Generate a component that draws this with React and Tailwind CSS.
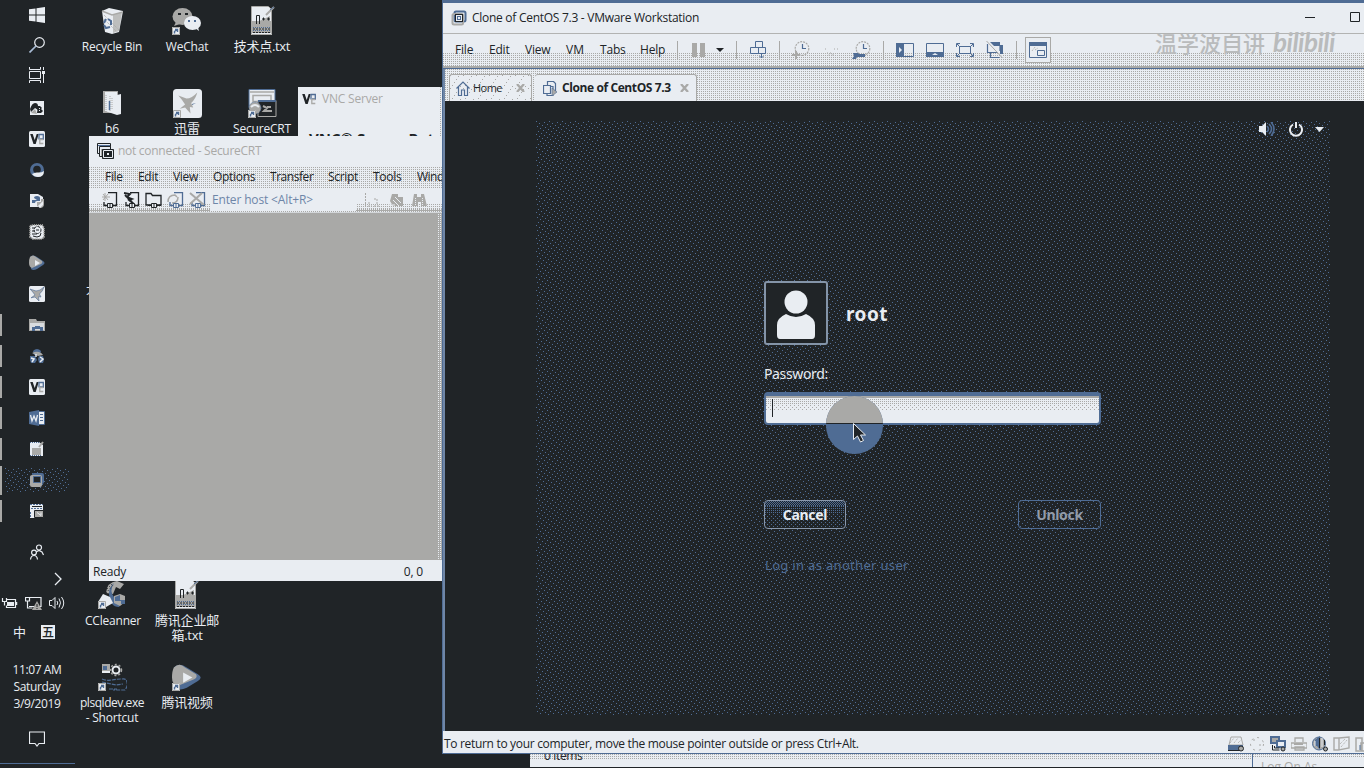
import React from "react";

const INK = "#202427";
const LIGHT = "#e9edf2";
const GRAY = "#a9a9a7";
const BLUE = "#4f6c94";

/* Ordered-dither texture that fills its parent */
function Dither({ id, kind, color = GRAY, className = "" }) {
  const size = { checker: 2, quarter: 2, half: 4, sparse: 13, wide: 13 }[kind];
  const cells = {
    checker: [[0, 0], [1, 1]],
    quarter: [[0, 0]],
    half: [[0, 0], [2, 2]],
    sparse: Array.from({ length: 13 }, (_, i) => [i, (i * 5) % 13]),
    wide: Array.from({ length: 6 }, (_, i) => [i * 2, (i * 10) % 13]),
  }[kind];
  return (
    <svg className={"pointer-events-none absolute inset-0 h-full w-full " + className} shapeRendering="crispEdges" aria-hidden="true">
      <defs>
        <pattern id={id} width={size} height={size} patternUnits="userSpaceOnUse">
          {cells.map(([x, y]) => <rect key={x + "-" + y} x={x} y={y} width="1" height="1" fill={color} />)}
        </pattern>
      </defs>
      <rect width="100%" height="100%" fill={`url(#${id})`} />
    </svg>
  );
}

function Svg({ w = 16, h = 16, vb, children, className = "" }) {
  return (
    <svg width={w} height={h} viewBox={vb || `0 0 ${w} ${h}`} fill="none" className={"block shrink-0 " + className}>
      {children}
    </svg>
  );
}

/* ---------- glyphs ---------- */
const Bird = () => (
  <path d="M1 3l6 2q4 0 8-4-1 4-4.500 7l1.500 3-2.500-.3L10 15l-4-4-4 .8L6 9Q4 6 1 3z" />
);
const Vnc = () => (
  <>
    <path d="M1.200 3h2.500l2 6 2-6h2L6.700 13H4.500z" fill={INK} />
    <path d="M10 8.500V3.500h4.300V8h-3.300" stroke={BLUE} strokeWidth="1.300" />
    <path d="M14.300 8.500h-3.500V12.500h3.500" stroke={GRAY} strokeWidth="1.300" />
  </>
);
const PlayBlob = () => (
  <>
    <path d="M1 2Q4-1 8 2l6 4q3 2 0 4l-6 4q-4 2-6 0z" fill={BLUE} />
    <path d="M1 2Q4-1 7 2l6 4q1 2-1 3l-9 4Q0 12 0 8t1-6z" fill={GRAY} />
    <path d="M6 5l5 3-5 3z" fill={LIGHT} />
  </>
);
const NoteFile = () => (
  <>
    <path d="M2 1h18l3 3v25H2z" fill={LIGHT} />
    <path d="M21 10v10H4v-2z" fill={GRAY} />
    <path d="M2 15h20v12H2z" fill={GRAY} />
    <path d="M2.500.5h17l3 3v25h-20z" stroke={GRAY} />
    <path d="M7.500 18V9.500h3V18M13 13h3m2 0h3M14.500 11.500v3m5-3v3" stroke={INK} />
    <path d="M4 21.500h18M4 24.500h18" stroke={BLUE} strokeDasharray="1 1" />
    <path d="M4 23h17M4 26.500h17" stroke={INK} strokeDasharray="2 1" />
    <path d="M17 9l8-8" stroke={GRAY} strokeWidth="2" />
    <path d="M21 4l4-3" stroke={BLUE} />
  </>
);
const Shortcut = ({ x = 0, y = 20 }) => (
  <g transform={`translate(${x} ${y})`}>
    <path d="M0 0h8v8H0z" fill={LIGHT} />
    <path d="M.5.5h7v7h-7z" stroke={GRAY} />
    <path d="M2.500 6.500V4.500L5 2.500M3 2.500h2.500V5" stroke={BLUE} strokeWidth="1.400" />
  </g>
);
const Vmware = () => (
  <>
    <rect x="3.500" y="1.500" width="11" height="10" rx="1.500" stroke={BLUE} strokeWidth="2" />
    <rect x="1.500" y="4" width="10.500" height="10.500" rx="1.500" stroke={GRAY} strokeWidth="2" />
    <rect x="4.500" y="4.500" width="7" height="7" fill={LIGHT} stroke={INK} />
    <rect x="6.500" y="6.500" width="3" height="3" stroke={BLUE} />
  </>
);
const CrtGlyph = () => (
  <>
    <path d="M.5.5h13v10H.5z" fill={LIGHT} stroke={INK} />
    <path d="M1 2.500h12" stroke={BLUE} />
    <path d="M2.500 3.500h11v10h-11z" fill={LIGHT} stroke={INK} />
    <path d="M4 6h9v7H4z" fill={GRAY} />
    <path d="M5.500 6.500h11v9h-11z" fill={INK} stroke={INK} />
    <path d="M6.500 7.500h9v7h-9z" stroke={LIGHT} />
    <path d="M10 10h2v2h-2z" fill={LIGHT} />
  </>
);

const taskIcons = [
  <Svg key="a"><path d="M1 1h14v14H1z" fill={LIGHT} /><path d="M1 9q2-6 5-6t3 3v4L6 8l-4 4z" fill={INK} /><path d="M2 13l4-4 2 5z" fill={GRAY} /><path d="M9 6h2l2 2-1 1 2 2-2 2H8z" fill={INK} /><path d="M10 8.500h1m-1 2h1" stroke={LIGHT} /></Svg>,
  <Svg key="b"><rect width="16" height="16" rx="1.500" fill={LIGHT} /><Vnc /></Svg>,
  <Svg key="c"><circle cx="8" cy="8" r="7" fill={BLUE} /><circle cx="8" cy="7.500" r="3.800" fill={INK} /><path d="M3 12q3-2 6-1.500T15 9q0 6-6 6-4 0-6-3z" fill={LIGHT} /></Svg>,
  <Svg key="d"><path d="M1 1h8l5 3v10H1z" fill={LIGHT} /><path d="M5 5q0-2 3-2t3 2v3H8Q6 8 6 10H3V7h5" fill={BLUE} /><path d="M8 13V9h4V6h3v5q0 4-4 4z" fill={GRAY} /><path d="M9 13l5-5v4l-3 3z" fill={LIGHT} /></Svg>,
  <Svg key="e"><path d="M1 2l3-1h9l2 3v9l-2 2H4l-3-2z" fill={LIGHT} /><path d="M1 2l3-1h9l2 3v9l-2 2H4l-3-2z" stroke={GRAY} strokeDasharray="1 1" strokeWidth="2" /><circle cx="8.500" cy="6" r="3.500" stroke={INK} strokeDasharray="3 1" /><path d="M3 4h3m-3 3h3m1-1h3M12 9q0 4-4 4l-4-1m-1-2h5" stroke={INK} /></Svg>,
  <Svg key="f"><PlayBlob /></Svg>,
  <Svg key="g"><rect width="16" height="16" rx="1.500" fill={LIGHT} /><g fill={GRAY} stroke={BLUE} strokeWidth=".6"><Bird /></g></Svg>,
  <Svg key="h"><path d="M0 2h7l1 2h8v10H0z" fill={GRAY} /><path d="M1 6h14v7H1z" fill={LIGHT} opacity=".75" /><path d="M3 14v-4h3V9h5v1h3v4h-3v-2H6v2z" fill={BLUE} /></Svg>,
  <Svg key="i"><path d="M4 3q4-4 8 0l-1 4H5z" fill={BLUE} /><path d="M3 5q4-2 7-1t4 3l-5 1z" fill={GRAY} /><path d="M1 8h5l2 4-2 3H2l-1-3zM10 8h4l1 4-1 3h-4l-1-4z" fill={BLUE} /><path d="M2 10l3 1-2 3m8-5l3 2-3 3M7 6v3" stroke={LIGHT} strokeWidth="1.500" /></Svg>,
  <Svg key="j"><rect width="16" height="16" rx="1.500" fill={LIGHT} /><Vnc /></Svg>,
  <Svg key="k"><path d="M9 2h6v12H9z" fill={LIGHT} /><path d="M0 2l10-2v16L0 14z" fill={BLUE} /><path d="M9 1.500h6.500v13H9" stroke={BLUE} /><path d="M11 4.500h3m-3 3h3m-3 3h3" stroke={BLUE} /><path d="M1.500 5l1.500 6 2-5 2 5 1.500-6" stroke={LIGHT} strokeWidth="1.300" /></Svg>,
  <Svg key="l"><path d="M1 1h9l4 3v11H1z" fill={LIGHT} /><path d="M3 7h9v7H3z" fill={GRAY} /><path d="M1 1.500h10M1 14.500h12" stroke={BLUE} strokeDasharray="1 1" /><path d="M10 6l4-5" stroke={GRAY} strokeWidth="2" /></Svg>,
  <Svg key="m"><rect x="3" y="1" width="12" height="11" rx="2" fill={BLUE} /><rect x="1" y="3" width="12" height="12" rx="2" fill={GRAY} /><path d="M4.500 4.500h7v6h-7z" fill={INK} stroke={BLUE} /></Svg>,
  <Svg key="n"><path d="M1 1h13v14H1z" fill={LIGHT} /><path d="M1 1.500h13M2 5.500h11M1.500 9v6" stroke={BLUE} strokeDasharray="2 1" /><path d="M3 3.500h10" stroke={INK} /><path d="M5.500 7.500h9v7h-9z" fill={GRAY} stroke={INK} /><path d="M8 9.500l4 3v-3" stroke={LIGHT} /></Svg>,
];

function Taskbar() {
  return (
    <nav className="absolute left-0 top-0 flex h-[768px] w-[74px] flex-col bg-[#202427] text-[#e9edf2]">
      <div className="flex h-[30px] items-center justify-center">
        <Svg><path d="M0 2.300l6.500-.9V7.500H0zM7.500 1.200L16 0v7.500H7.500zM0 8.500h6.500v6L0 13.700zM7.500 8.500H16V16l-8.500-1.200z" fill={LIGHT} /></Svg>
      </div>
      <div className="flex h-[30px] items-center justify-center">
        <Svg><circle cx="10.500" cy="5.500" r="4.800" stroke={LIGHT} strokeWidth="1.200" /><path d="M7 9L.5 15.500" stroke="#a9bdd6" strokeWidth="1.700" /></Svg>
      </div>
      <div className="flex h-[30px] items-center justify-center">
        <Svg><path d="M.5 0v2.500h11V0M.5 16v-2.500h11V16M.5 4.500h11v7H.5zM14.500 0v3m0 4v9" stroke={LIGHT} /><path d="M13 4h3v3h-3z" fill={LIGHT} /></Svg>
      </div>
      <ul className="mt-[2px] flex flex-col">
        {taskIcons.map((icon, i) => (
          <li key={i} className="relative flex h-[31px] items-center justify-center">
            {i === 12 && <div className="absolute left-[5px] top-[4px] h-6 w-16"><Dither id="dActive" kind="sparse" color={BLUE} /></div>}
            {i > 6 && <span className={i === 12 ? "absolute left-0 top-0.5 h-[29px] w-0.5 bg-[#a9a9a7]" : "absolute left-0 top-[5px] h-[22px] w-0.5 bg-[#a9a9a7]"} />}
            <span className="relative">{icon}</span>
          </li>
        ))}
      </ul>
      <div className="mt-[10px] flex h-8 items-center justify-center">
        <Svg><circle cx="10" cy="3.500" r="2.500" stroke={LIGHT} strokeWidth="1.200" /><path d="M7 8l3-1.500L13 8l1.500 3" stroke={LIGHT} strokeWidth="1.200" /><circle cx="5" cy="8.500" r="2.400" fill={INK} stroke={LIGHT} strokeWidth="1.200" /><path d="M1.500 15.500Q2 11.500 5 11.500t3.500 4" stroke={LIGHT} strokeWidth="1.200" /></Svg>
      </div>
      <div className="-mt-px flex h-6 items-center justify-end pr-3"><Svg w={8} h={14}><path d="M1 1l6 6-6 6" stroke={LIGHT} strokeWidth="1.300" /></Svg></div>
      <div className="flex h-6 items-center gap-[7px] pl-[1px]">
        <Svg w={17}><path d="M1.500 3v3.500h4V3M3.500 6v4.500M5.500 4.500h9v8h-9v-2" stroke={LIGHT} strokeWidth="1.200" /><path d="M6 7h7v4H6z" fill={LIGHT} /><path d="M15.500 7v3" stroke={LIGHT} strokeWidth="1.500" /></Svg>
        <Svg w={17}><path d="M4 2.500h12v9H4M.5 2.500h4v3.500H.5zM2.500 6v7h5" stroke={LIGHT} strokeWidth="1.200" /><path d="M12 6l5 9H7z" fill={GRAY} /><path d="M12 9v3m0 1v1" stroke={INK} /></Svg>
        <Svg w={17}><path d="M.5 5.500H3l3-3v11l-3-3H.5z" stroke={LIGHT} /><path d="M8 6q1.500 2 0 4m2-6.500q3 4 0 9M12.500 2q4.500 6 0 12" stroke={LIGHT} /></Svg>
      </div>
      <div className="flex h-[34px] items-center gap-[15px] pl-[13px] font-['Noto_Sans_CJK_SC',sans-serif]">
        <span className="text-[13px] leading-[14px]">中</span>
        <span className="h-[14px] w-[14px] bg-[#e9edf2] text-center text-[12px] font-medium leading-[13px] text-[#202427]">五</span>
      </div>
      <div className="mt-3 h-[51px] text-center text-[12px] leading-[17px] tracking-[-0.4px]">
        <div>11:07 AM</div><div className="tracking-[-0.350px]">Saturday</div><div className="tracking-[-0.400px]">3/9/2019</div>
      </div>
      <div className="mt-3 flex h-[30px] items-center justify-center">
        <Svg><path d="M.5 1h15v11.500H10L8 15l-2-2.500H.5z" stroke={LIGHT} strokeWidth="1.200" /></Svg>
      </div>
      <div className="mt-[9px] h-px w-[75px] bg-[#4f6c94]" />
    </nav>
  );
}

function DesktopIcon({ pos, labels, children }) {
  return (
    <div className={"absolute flex w-[78px] flex-col items-center text-[#e9edf2] " + pos}>
      <div className="flex h-[32px] items-center justify-center">{children}</div>
      <div className="mt-[2px] whitespace-nowrap text-center text-[12px] leading-[15px] tracking-[-0.200px]">
        {labels.map((l) => <div key={l}>{l}</div>)}
      </div>
    </div>
  );
}

function Desktop() {
  return (
    <>
      <DesktopIcon pos="left-[73px] top-[5px]" labels={["Recycle Bin"]}>
        <Svg w={22} h={26}><path d="M1 3l7-3 14 3-4 21-7 2-7-2z" fill={LIGHT} /><path d="M12 7l9-3-3 19-6 2z" fill={GRAY} opacity=".7" /><path d="M1 3l10 4 11-3" stroke={GRAY} strokeWidth="1.500" /><path d="M3 7l15 15M3 11l12 12" stroke={GRAY} strokeDasharray="1 1" /><path d="M7 11l3 2v4m-1 2l-4 1-2-3m0-2l2-4" stroke={BLUE} strokeWidth="2" /></Svg>
      </DesktopIcon>
      <DesktopIcon pos="left-[148px] top-[5px]" labels={["WeChat"]}>
        <Svg w={30} h={28}><ellipse cx="10.500" cy="9.500" rx="10" ry="8.500" fill={GRAY} /><path d="M4 15l-2 4 6-2z" fill={GRAY} /><path d="M6 6h3v2H6zm7 0h3v2h-3z" fill={INK} /><ellipse cx="20.500" cy="16" rx="8.500" ry="7" fill={LIGHT} /><path d="M23 21l4 3-1-4z" fill={LIGHT} /><path d="M16 13h2v2h-2zm6 0h2v2h-2z" fill={BLUE} /><Shortcut x={0} y={20} /></Svg>
      </DesktopIcon>
      <DesktopIcon pos="left-[223px] top-[5px]" labels={[<span key="t" className="text-[13px] tracking-[-0.300px]">技术点.txt</span>]}><Svg w={26} h={30}><NoteFile /></Svg></DesktopIcon>
      <DesktopIcon pos="left-[73px] top-[87px]" labels={["b6"]}>
        <Svg w={20} h={26}><path d="M1 1h15v22H1z" fill={GRAY} /><path d="M3 2h12v3l4-1v20l-4 1L3 21z" fill={LIGHT} /><path d="M4 5v17M8 6v15M10 8v12" stroke={GRAY} strokeDasharray="1 1" /><path d="M7.500 11v9" stroke={BLUE} strokeWidth="1.500" /></Svg>
      </DesktopIcon>
      <DesktopIcon pos="left-[148px] top-[87px]" labels={[<span key="x" className="text-[13px]">迅雷</span>]}>
        <Svg w={29} h={29}><rect width="29" height="29" rx="3.500" fill={LIGHT} /><g fill={GRAY} transform="translate(4 2) scale(1.350 1.500)"><Bird /></g><path d="M19 15l4-1-4 2z" fill={BLUE} /><Shortcut x={0} y={21} /></Svg>
      </DesktopIcon>
      <DesktopIcon pos="left-[223px] top-[87px]" labels={["SecureCRT"]}>
        <Svg w={29} h={29}><path d="M1 .5h26v18H1z" fill={LIGHT} stroke={BLUE} /><path d="M2 3h24M5 6.500h18v6H5z" stroke={GRAY} strokeWidth="1.500" /><path d="M10 11.500h18v16H10z" fill={INK} stroke={GRAY} /><path d="M10 12h18" stroke={BLUE} strokeWidth="2" /><path d="M15 17l4 2-3 3h8m-5-4h4" stroke={GRAY} strokeWidth="2" /><circle cx="7" cy="19" r="6" fill={GRAY} stroke={BLUE} strokeDasharray="1 1" /><path d="M3 18q4-4 8 0" stroke={LIGHT} strokeWidth="2" /><Shortcut x={0} y={21} /></Svg>
      </DesktopIcon>
      <DesktopIcon pos="left-[74px] top-[579px]" labels={["CCleanner"]}>
        <Svg w={29} h={30} className="-ml-px"><path d="M8 13Q9 2 19 1l7 3-4 5-4-2-3 7z" fill={GRAY} /><path d="M16 3q-5 8 0 14 4 5 9 4l-4 6q-9 0-10-13 0-7 5-11z" fill={BLUE} /><path d="M5 14l7 3 3 6-7 4-8-5z" fill={LIGHT} /><path d="M16 16l6-2 5 2v6l-5 4-6-3z" fill={GRAY} /><path d="M22 15v5h5v4h-4v-3h-6v-4z" fill={BLUE} /><path d="M7 11l8-8M8 13l8-9" stroke={INK} strokeDasharray="1 2" /><Shortcut x={0} y={21} /></Svg>
      </DesktopIcon>
      <DesktopIcon pos="left-[148px] top-[579px]" labels={[<span key="a" className="text-[13px]">腾讯企业邮</span>, <span key="b" className="text-[13px] tracking-[-0.300px]">箱.txt</span>]}><Svg w={26} h={30} className="-ml-0.5"><NoteFile /></Svg></DesktopIcon>
      <DesktopIcon pos="left-[73px] top-[661px]" labels={[<span key="p" className="tracking-[-0.450px]">plsqldev.exe</span>, "- Shortcut"]}>
        <Svg w={29} h={29}><path d="M4 1h8v8H4z" fill={GRAY} /><path d="M5 3h4v4H5z" fill={BLUE} /><path d="M4 9h8" stroke={LIGHT} strokeWidth="2" /><circle cx="18" cy="7" r="3.500" stroke={LIGHT} strokeWidth="2" /><circle cx="18" cy="7" r="5.500" stroke={GRAY} strokeWidth="1.500" strokeDasharray="2 2" /><path d="M4 16q5 2 10 1t10-1q4-1 5 3t-2 8H15M4 19l14 3 7-1M11 26h8" stroke={BLUE} strokeWidth="1.200" strokeDasharray="4 1" /><Shortcut x={0} y={20} /></Svg>
      </DesktopIcon>
      <DesktopIcon pos="left-[148px] top-[661px]" labels={[<span key="v" className="text-[13px]">腾讯视频</span>]}>
        <Svg w={30} h={29}><g transform="translate(0 1) scale(1.850 1.700)"><PlayBlob /></g><Shortcut x={0} y={20} /></Svg>
      </DesktopIcon>
      <div className="absolute left-[86px] top-[282px] w-[4px] overflow-hidden text-[12px] leading-[15px] text-[#e9edf2]">大</div>
    </>
  );
}

function VncWindow() {
  return (
    <section className="absolute left-[298px] top-[87px] h-[49px] w-[144px] overflow-hidden bg-[#e9edf2]">
      <header className="flex h-6 items-center gap-[5px] pl-[3px]">
        <Svg><Vnc /></Svg>
        <span className="whitespace-nowrap text-[12px] tracking-[-0.200px] text-[#a9a9a7]">VNC Server</span>
      </header>
      <div className="flex justify-between whitespace-nowrap pl-[11px] pr-2 pt-[17px] text-[15px] font-bold leading-[20px] text-[#202427]"><span>VNC® Server</span><span>Rat</span></div>
      <div className="absolute right-0 top-0 h-full w-0.5"><Dither id="dVnc" kind="quarter" /></div>
    </section>
  );
}

function HostTool({ kind, color }) {
  return (
    <Svg w={17} h={16}>
      {kind !== "folder" && <path d="M7 .5h8.500v13H3V10" stroke={color} strokeWidth="1.300" />}
      {kind === "folder" && <path d="M1 13V1.500h5l1.500 2H16V13H1z" stroke={color} strokeWidth="1.300" />}
      {kind === "new" && <path d="M4 1v8M1 5h8M2 2l5 6m0-6L2 8" stroke={GRAY} />}
      {kind === "quick" && <path d="M1 1l6 1-3 3 5 2-3 1 5 4M2 3l7 7" stroke={color} strokeWidth="1.800" />}
      {kind === "re" && <path d="M1 10q0-7 7-7l2 2M11 5q0 6-6 6" stroke={GRAY} strokeWidth="1.500" />}
      {kind === "off" && <path d="M1 1l14 12M13 1L1 12" stroke={GRAY} strokeWidth="2" />}
      <path d="M3 13.500h13" stroke={color} />
      <path d="M6.500 11.500h5v4h-5z" fill={LIGHT} stroke={color} /><path d="M9 11v5" stroke={color} />
    </Svg>
  );
}

function SecureCrt() {
  const m = "shrink-0 ";
  return (
    <section className="absolute left-[89px] top-[136px] flex h-[445px] w-[353px] flex-col overflow-hidden bg-[#e9edf2] text-[#202427]">
      <header className="flex h-[31px] shrink-0 items-center gap-1 pb-0.5 pl-2">
        <Svg w={17}><CrtGlyph /></Svg>
        <span className="whitespace-nowrap text-[12px] tracking-[-0.280px] text-[#a9a9a7]">not connected - SecureCRT</span>
      </header>
      <div className="relative h-[21px] shrink-0">
        <Dither id="dCrtMenu" kind="quarter" />
        <div className="relative flex h-full items-center whitespace-nowrap pb-0.5 pl-4 text-[12px] tracking-[-0.300px]">
          <span className={m + "w-[33px]"}>File</span><span className={m + "w-[35px]"}>Edit</span><span className={m + "w-[40px]"}>View</span>
          <span className={m + "w-[57px]"}>Options</span><span className={m + "w-[58px] tracking-[-0.450px]"}>Transfer</span><span className={m + "w-[45px]"}>Script</span>
          <span className={m + "w-[44px]"}>Tools</span><span className={m + "w-[25px] tracking-[-0.500px]"}>Wind</span>
        </div>
      </div>
      <div className="relative flex h-6 shrink-0 items-center pl-3">
        <div className="absolute inset-x-0 bottom-0 h-2"><Dither id="dCrtTool" kind="quarter" /></div>
        <div className="absolute inset-x-0 bottom-0 h-[3px]"><Dither id="dCrtTool2" kind="checker" /></div>
        <div className="relative flex gap-[5px]">
          <HostTool kind="new" color={INK} /><HostTool kind="quick" color={INK} /><HostTool kind="folder" color={INK} /><HostTool kind="re" color={BLUE} /><HostTool kind="off" color={BLUE} />
        </div>
        <div className="relative ml-1 flex h-[22px] w-[146px] items-center whitespace-nowrap bg-[#e9edf2] pb-px pl-0.5 text-[12px] tracking-[-0.150px] text-[#6e86a8]">Enter host &lt;Alt+R&gt;</div>
        <div className="relative ml-[9px] flex gap-[7px]">
          <Svg><path d="M.5 1v14M3 14h4m2 0h5M9 7h3v5M4 10v2" stroke={GRAY} strokeDasharray="2 1" /></Svg>
          <Svg><path d="M4 2h6v3h5v9H5L2 9z" fill={GRAY} /><path d="M5 8l6 6M1 13h6M7 5l6 6" stroke={LIGHT} /></Svg>
          <Svg><path d="M3 2h3v3h4V2h3l3 12h-6v-4H7v4H1z" fill={GRAY} /><path d="M4.500 6v7m7-7v7" stroke={LIGHT} strokeDasharray="1 1" /></Svg>
        </div>
      </div>
      <div className="relative min-h-0 flex-1 bg-[#a9a9a7]">
        <div className="absolute inset-y-0 right-0 w-1"><Dither id="dCrtEdge" kind="quarter" color={LIGHT} /></div>
        <div className="absolute inset-x-0 top-0 h-px bg-[#d3d6d9]" />
      </div>
      <footer className="flex h-[21px] shrink-0 items-center justify-between pl-1 pr-[19px] pt-[2px] text-[12px] tracking-[-0.200px]"><span>Ready</span><span>0, 0</span></footer>
    </section>
  );
}

const Sep = ({ className = "" }) => <span className={"h-[18px] w-px shrink-0 bg-[#a9a9a7] " + className} />;
const Clock = () => (<><circle cx="11" cy="7.500" r="6.800" stroke={GRAY} strokeWidth="1.200" strokeDasharray="2 1" /><path d="M11.500 3v4.500h3.500" stroke={BLUE} strokeWidth="1.200" /></>);

function VmToolbar() {
  const m = "shrink-0 overflow-visible whitespace-nowrap ";
  return (
    <div className="relative h-[32px] shrink-0">
      <div className="absolute inset-x-0 bottom-0 h-[13px]"><Dither id="dVmMenu" kind="quarter" /></div>
      <div className="relative flex h-full items-center text-[12px] tracking-[-0.200px]">
        <span className={m + "ml-[12px] w-[34px]"}>File</span><span className={m + "w-9"}>Edit</span><span className={m + "w-[41px]"}>View</span>
        <span className={m + "w-[34px] tracking-normal"}>VM</span><span className={m + "w-10"}>Tabs</span><span className={m + "w-[37px]"}>Help</span>
        <Sep />
        <Svg w={13} h={14} className="ml-[14px]"><path d="M0 0h5v14H0zM8 0h5v14H8z" fill={GRAY} /></Svg>
        <Svg w={8} h={4} className="ml-[11px]"><path d="M0 0h8L4 4z" fill={INK} /></Svg>
        <Sep className="ml-[12px]" />
        <Svg w={17} h={18} className="ml-[13px]"><path d="M5.500.5h7v6h-7zM.500 6.500h8v6h-8zM8.500 6.500h7v6h-7zM11.500 13v4m-2-2l2 2 2-2" stroke={BLUE} /></Svg>
        <Sep className="ml-3" />
        <Svg w={19} h={18} className="ml-[11px]"><Clock /><path d="M5 10v8M1 14h8" stroke={GRAY} strokeWidth="2" /></Svg>
        <Svg w={18} h={18} className="ml-[13px]"><path d="M2 8h1m8 0h4m-11 4h4l3 2H5" stroke={GRAY} strokeDasharray="1 2" /></Svg>
        <Svg w={19} h={18} className="ml-[11px]"><Clock /><path d="M1 12h5l1 1h6v3H5l-1 2H0l2-3z" fill={BLUE} /></Svg>
        <Sep className="ml-3" />
        <Svg w={18} h={14} className="ml-3"><path d="M.5.5h17v13H.5z" stroke={BLUE} /><path d="M0 0h8v14H0z" fill={BLUE} /><path d="M3 4v6l3-3z" fill={LIGHT} /></Svg>
        <Svg w={18} h={14} className="ml-3"><path d="M.5.5h17v13H.5z" stroke={BLUE} /><path d="M0 9h18v5H0z" fill={BLUE} /><path d="M6 12h6l-3-2z" fill={LIGHT} /></Svg>
        <Svg w={18} h={14} className="ml-3"><path d="M3.500 3.500h11v7h-11z" stroke={BLUE} /><path d="M.5 4V.5H4L1 1l3 3M14 .5h3.500V4L17 1l-3 3M.5 10v3.500H4L1 13l3-3M14 13.500h3.500V10l-.5 3-3-3" stroke={BLUE} /></Svg>
        <Svg w={18} h={18} className="ml-3"><path d="M4 1h10v3h3v9h-3V5H8z" fill={BLUE} /><path d="M1.500 3v8.500h3v5h9M14 5v5" stroke={BLUE} strokeWidth="1.200" /><path d="M3 11.500h9" stroke={BLUE} /><path d="M1.500 0l16 17" stroke={LIGHT} /><path d="M.5 0l16 17" stroke={GRAY} /></Svg>
        <Sep className="ml-[12px]" />
        <div className="ml-2 flex h-[26px] w-[26px] shrink-0 items-center justify-center border border-[#a9a9a7] bg-[#e9edf2]">
          <Svg w={18} h={16}><path d="M.5.5h17v15H.5z" stroke={BLUE} /><path d="M0 0h18v4H0z" fill={BLUE} /><path d="M8.500 8.500h7v5h-7z" stroke={BLUE} /><path d="M3 9l3-4m0 3l3-2" stroke={GRAY} strokeDasharray="1 1" /></Svg>
        </div>
      </div>
    </div>
  );
}

const StatusIcons = () => (
  <div className="flex shrink-0 items-center gap-[5px]">
    <Svg w={16}><path d="M3 1h10l2 8H1z" fill={LIGHT} stroke={GRAY} /><path d="M2 7l4-5m0 5l4-5m0 5l3-3" stroke={GRAY} strokeDasharray="1 1" /><path d="M0 9h15v5H0z" fill={BLUE} /><path d="M0 14.500h12" stroke={INK} /><circle cx="13" cy="12.500" r="2.500" fill={GRAY} stroke={INK} /></Svg>
    <Svg w={16}><circle cx="8" cy="8" r="6.500" stroke={GRAY} strokeDasharray="2 4" /><path d="M4 4h2m4 5h2" stroke={GRAY} /></Svg>
    <Svg w={16}><path d="M1 1h8v6H1z" fill={GRAY} stroke={BLUE} strokeWidth="2" /><path d="M7 5h8v6H7z" fill={LIGHT} stroke={BLUE} strokeWidth="2" /><path d="M2.500 9v5h7m-5-4v2h5" stroke={INK} /><circle cx="13" cy="13" r="2" fill={GRAY} stroke={INK} /></Svg>
    <Svg w={16}><path d="M4 6V2h8v4M0 7h16v5H0zM4 11h9v3H4z" stroke={GRAY} strokeWidth="1.300" /><path d="M3 8h9" stroke={GRAY} strokeWidth="2" /></Svg>
    <Svg w={16}><circle cx="7" cy="7.500" r="6.500" fill={GRAY} stroke={BLUE} /><path d="M4 3l4-3v14l-3-4H3V4z" fill={BLUE} /><path d="M3 5v5m7-8v9" stroke={LIGHT} /><path d="M7.500 2v10M12.500 4v5" stroke={INK} /><circle cx="13.500" cy="13" r="2" fill={GRAY} stroke={INK} /></Svg>
    <Svg w={17}><path d="M1 2h5v12H1zM6 2l10-1v11L6 14z" stroke={GRAY} strokeWidth="1.400" /><path d="M8 11l6-7M7 8l5-5" stroke={GRAY} strokeDasharray="1 1" /></Svg>
    <Svg w={16}><path d="M1 2h6v13H1zM6 7h8v8H6z" stroke={GRAY} strokeWidth="1.500" /><path d="M5 9v5" stroke={BLUE} /></Svg>
  </div>
);

function GuestScreen() {
  return (
    <div className="relative ml-[91px] mt-5 h-[594px] w-[794px] font-['Noto_Sans','Open_Sans',sans-serif]">
      <Dither id="dGuest" kind="sparse" color={BLUE} />
      <div className="relative flex h-full flex-col">
        <div className="flex h-4 items-center justify-end pr-[6px]">
          <Svg w={16} h={14}><path d="M0 4h3l4-4v14l-4-4H0z" fill={LIGHT} /><path d="M8 4q3 3 0 6M10 2q5 5 0 10M12 0q6 7 0 14" stroke={BLUE} strokeWidth="1.600" /></Svg>
          <Svg w={14} h={15} className="ml-[14px]"><path d="M4 2.500a6 6 0 1 0 6 0M7 0v6" stroke={LIGHT} strokeWidth="2" /></Svg>
          <Svg w={9} h={5} className="ml-3"><path d="M0 0h9L4.500 5z" fill={LIGHT} /></Svg>
        </div>
        <div className="ml-[228px] mt-[144px] flex w-[337px] flex-col">
          <div className="flex h-16 items-center">
            <div className="flex h-16 w-16 items-end justify-center rounded-[3px] border-2 border-[#8494a8] bg-[#202427] pb-[3px]">
              <Svg w={38} h={51}><circle cx="19" cy="13" r="11.500" fill={LIGHT} /><path d="M0 50V36q0-7 9-11 10 6 20 0 9 4 9 11v10q0 4-3 4H3q-3 0-3-4z" fill={LIGHT} /></Svg>
            </div>
            <span className="ml-[18px] mt-0.5 text-[19px] font-bold tracking-[0.450px] text-[#e9edf2]">root</span>
          </div>
          <label className="mt-[19px] h-5 text-[14px] leading-[20px] tracking-[-0.350px] text-[#e9edf2]">Password:</label>
          <div className="relative mt-2 h-[33px] overflow-visible rounded-[4px] border-2 border-t-[4px] border-[#4f6c94] bg-[#e9edf2]">
            <div className="absolute inset-x-0 top-0 h-0.5 bg-[#a9a9a7]" />
            <div className="absolute inset-x-0 top-[3px] h-[5px]"><Dither id="dField" kind="quarter" /></div>
            <div className="absolute inset-x-0 top-[9px] h-[6px]"><Dither id="dField2" kind="half" /></div>
            <div className="absolute left-[6px] top-[3px] h-[18px] w-px bg-[#202427]" />
            <div className="absolute left-[60px] top-0 h-[58px] w-[57px] overflow-hidden rounded-full bg-[#4f6c94]">
              <div className="h-[28px] border-b border-[#202427] bg-[#a9a9a7]" />
            </div>
            <Svg w={14} h={21} className="absolute left-[87px] top-[27px]"><path d="M.5.5v16l4-3.500 3 6 3-1.500-3-5.500h5z" fill={INK} stroke={LIGHT} /></Svg>
          </div>
          <div className="mt-[75px] flex items-center justify-between text-[14px] font-bold tracking-[-0.300px]">
            <div className="relative flex h-[29px] w-[82px] items-center justify-center overflow-hidden rounded-[4px] border border-[#8997ab] bg-[#202427] text-[#e9edf2]">
              <div className="absolute inset-x-0 top-0 h-[5px]"><Dither id="dCancel1" kind="checker" color={BLUE} /></div>
              <div className="absolute inset-x-0 top-[5px] h-[7px]"><Dither id="dCancel2" kind="quarter" color={BLUE} /></div>
              <div className="absolute inset-x-0 top-[13px] h-[14px]"><Dither id="dCancel3" kind="half" color={BLUE} /></div>
              <span className="relative">Cancel</span>
            </div>
            <div className="flex h-[29px] w-[83px] items-center justify-center rounded-[4px] border border-[#4f6c94] text-[#929ba7]">Unlock</div>
          </div>
          <div className="mt-[26px] pl-px text-[13px] leading-[20px] tracking-[0.320px] text-[#4f6c94]">Log in as another user</div>
        </div>
      </div>
    </div>
  );
}

function VmwareWindow() {
  return (
    <section className="absolute left-[442px] top-0 flex h-[754px] w-[922px] flex-col overflow-hidden border-b border-l border-t-[3px] border-[#4f6c94] bg-[#e9edf2] text-[#202427]">
      <header className="flex h-[30px] shrink-0 items-center">
        <Svg w={17} className="-mt-px ml-[8px]"><Vmware /></Svg>
        <span className="ml-[4px] whitespace-nowrap text-[12px] tracking-[-0.275px]">Clone of CentOS 7.3 - VMware Workstation</span>
        <div className="-mt-0.5 ml-auto flex items-center gap-[35px]">
          <Svg w={10} h={10}><path d="M0 5.500h10" stroke={INK} /></Svg>
          <Svg w={10} h={10} className="mr-1"><path d="M.5.5h9v9h-9z" stroke={INK} /></Svg>
        </div>
      </header>
      <div className="h-px shrink-0 bg-[#b2b3b2]" />
      <VmToolbar />
      <div className="h-0.5 shrink-0 bg-[#a9a9a7]" />
      <div className="h-px shrink-0 bg-[#4f6c94]" />
      <div className="flex min-h-0 flex-1 flex-col border-l-2 border-l-[#6f86a6]">
        <div className="relative h-[32px] shrink-0">
          <Dither id="dTabs" kind="quarter" />
          <div className="relative flex h-full items-end pl-1 text-[12px]">
            <div className="relative flex h-[27px] w-[83px] items-center rounded-t-[3px] border-x border-t border-[#a9a9a7] bg-[#e9edf2] pl-[6px]">
              <Dither id="dHome" kind="wide" />
              <Svg w={14} h={15} className="relative"><path d="M.5 7.500L7 1l6.500 6.500M2.500 6v8.500h3V9h3v5.500h3V6" stroke={BLUE} strokeWidth="1.200" /></Svg>
              <span className="relative ml-[3px] text-[11px] tracking-[-0.550px]">Home</span>
              <Svg w={9} h={8} className="relative ml-auto mr-[6px]"><path d="M1 0l7 8M8 0L1 8" stroke={GRAY} strokeWidth="2.300" /></Svg>
            </div>
            <div className="ml-[3px] flex h-[27px] w-[162px] items-center rounded-t-[3px] border-r border-t border-[#a9a9a7] bg-[#e9edf2] pl-2">
              <Svg w={14} h={15}><path d="M4.500 4V.5h6l2 2v7h-3M.5 4.500h7v8h-7zM4 12.500v2h6v-9H7" stroke={BLUE} strokeWidth="1.200" /><path d="M9 7l5 4-5 4z" fill={GRAY} stroke={BLUE} strokeWidth=".6" /></Svg>
              <span className="ml-[5px] whitespace-nowrap font-bold tracking-[-0.400px]">Clone of CentOS 7.3</span>
              <Svg w={9} h={8} className="ml-auto mr-[7px]"><path d="M1 0l7 8M8 0L1 8" stroke={GRAY} strokeWidth="2.300" /></Svg>
            </div>
          </div>
        </div>
        <div className="min-h-0 flex-1 bg-[#202427]"><GuestScreen /></div>
      </div>
      <footer className="flex h-[22px] shrink-0 items-center overflow-hidden pl-px pt-[4px] text-[12px]">
        <span className="w-[784px] shrink-0 whitespace-nowrap tracking-[-0.315px]">To return to your computer, move the mouse pointer outside or press Ctrl+Alt.</span>
        <StatusIcons />
      </footer>
    </section>
  );
}

function LowerWindows() {
  return (
    <section className="absolute left-[530px] top-[754px] flex h-[13px] w-[834px] overflow-hidden bg-[#e9edf2] text-[12px] text-[#202427]">
      <div className="relative w-[723px] shrink-0 border-r border-[#4f6c94]">
        <div className="absolute inset-x-0 top-0 h-[6px]"><Dither id="dLow" kind="quarter" /></div>
        <div className="relative -mt-[6px] pl-[14px] leading-[16px] tracking-[-0.350px]">0 items</div>
      </div>
      <div className="relative flex-1">
        <div className="absolute inset-x-0 top-0 h-1"><Dither id="dLow2" kind="quarter" /></div>
        <div className="relative mt-[5px] whitespace-nowrap pl-2 leading-[16px] text-[#a9a9a7]">Log On As</div>
      </div>
    </section>
  );
}

export default function App() {
  return (
    <main className="relative h-[768px] w-[1364px] overflow-hidden bg-[#202427] font-['Open_Sans','Noto_Sans_CJK_SC',sans-serif]">
      <Desktop />
      <Taskbar />
      <VncWindow />
      <SecureCrt />
      <LowerWindows />
      <VmwareWindow />
      <div className="absolute left-[1155px] top-[30px] flex h-6 items-center whitespace-nowrap font-['Noto_Sans_CJK_SC',sans-serif] leading-6 text-[#b9bbbc]">
        <span className="text-[22px] font-medium">温学波自讲</span>
        <span className="ml-2 font-['Lato',sans-serif] text-[26px] font-bold italic tracking-[-0.500px]">bilibili</span>
      </div>
    </main>
  );
}
